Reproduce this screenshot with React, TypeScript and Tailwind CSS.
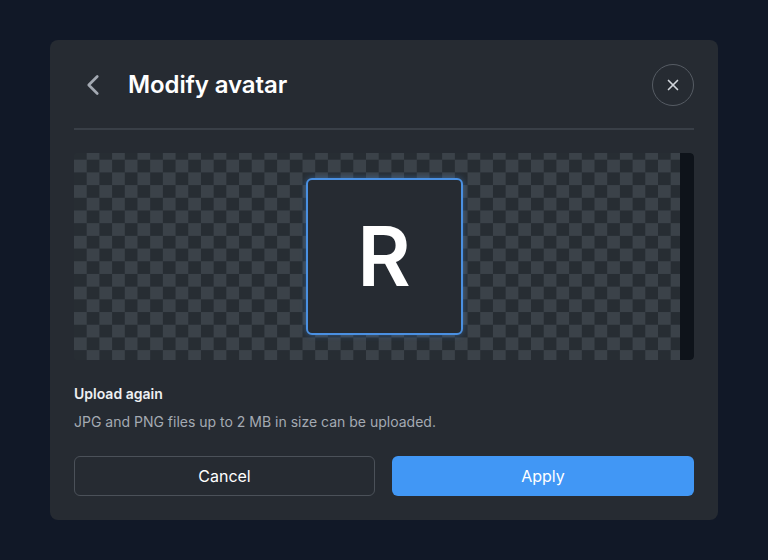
import { ChevronLeft, X } from 'lucide-react';

export default function App() {
  return (
    <div className="w-[768px] h-[560px] bg-[#111827] flex items-center justify-center font-['Inter',sans-serif]">
      <div className="w-[668px] h-[480px] bg-[#262b32] rounded-lg px-6 pt-6 pb-6 flex flex-col">
        {/* header */}
        <div className="flex items-center justify-between h-[42px]">
          <div className="flex items-center">
            <button className="w-[38px] h-[38px] flex items-center justify-center text-[#a3a9b2]">
              <ChevronLeft size={34} strokeWidth={1.9} />
            </button>
            <h2 className="ml-4 text-[24px] leading-8 font-semibold text-white tracking-[-0.1px]">
              Modify avatar
            </h2>
          </div>
          <button className="w-[42px] h-[42px] rounded-full border border-[#565c64] flex items-center justify-center text-[#d1d5db]">
            <X size={18} strokeWidth={2.2} />
          </button>
        </div>

        <div className="mt-[22px] h-[2px] bg-[#393f47]" />

        {/* crop area */}
        <div className="relative mt-[23px] h-[207px] rounded overflow-hidden bg-[repeating-conic-gradient(#3b4249_0_25%,#272d33_0_50%)] bg-[length:25.4px_25.4px] bg-[position:0_-6px] flex items-center justify-center">
          <div className="w-[157px] h-[157px] rounded-md border-2 border-[#4a90e2] bg-[#262b32] shadow-[0_0_6px_rgba(74,144,226,0.45)] flex items-center justify-center">
            <span className="text-[82px] font-semibold text-white leading-none">R</span>
          </div>
          <div className="absolute right-0 top-0 bottom-0 w-[14px] bg-[#0e131a] rounded-r" />
        </div>

        <div className="mt-6 text-[14px] leading-5 font-semibold text-[#eef0f2]">Upload again</div>
        <div className="mt-2 text-[14px] leading-5 text-[#a4aab2]">
          JPG and PNG files up to 2 MB in size can be uploaded.
        </div>

        <div className="mt-6 flex gap-[17px]">
          <button className="w-[301px] h-10 rounded-md border border-[#4b5159] text-white text-[16px]">
            Cancel
          </button>
          <button className="flex-1 h-10 rounded-md bg-[#4197f5] text-white text-[16px]">
            Apply
          </button>
        </div>
      </div>
    </div>
  );
}
